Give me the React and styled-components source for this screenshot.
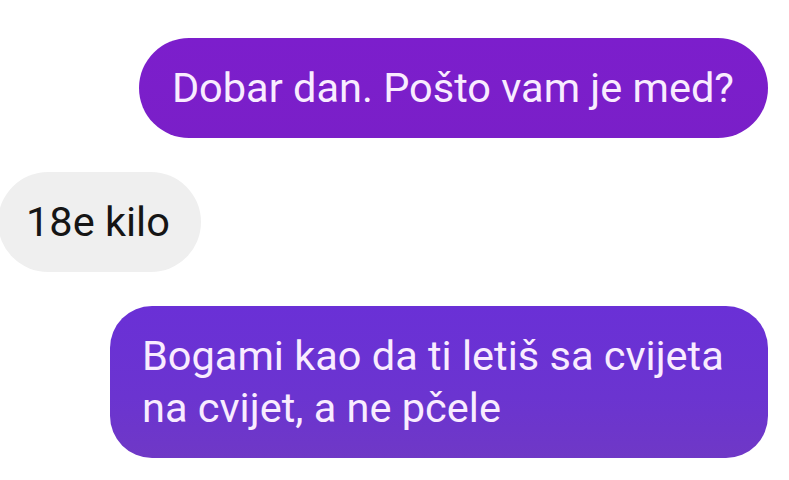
import React from "react";
import styled, { createGlobalStyle } from "styled-components";

const Global = createGlobalStyle`
  html, body { margin: 0; padding: 0; background: #ffffff; }
  body { font-family: Roboto, "Noto Sans", "Liberation Sans", sans-serif; }
`;

const Chat = styled.div`
  width: 789px;
  height: 480px;
  box-sizing: border-box;
  padding: 38px 21px 0 0;
  display: flex;
  flex-direction: column;
  gap: 34px;
  overflow: hidden;
`;

const Bubble = styled.div`
  box-sizing: border-box;
  font-size: 41.5px;
  line-height: 52px;
  padding: 24px ${(p) => (p.$tall ? "32px" : p.$mine ? "34px" : "31px")} 24px ${(p) => (p.$tall ? "32px" : p.$mine ? "33px" : "28px")};
  border-radius: ${(p) => (p.$tall ? "42px" : "50px")};
  align-self: ${(p) => (p.$mine ? "flex-end" : "flex-start")};
  max-width: 658px;
  color: ${(p) => (p.$mine ? "#f9ecff" : "#151515")};
  background: ${(p) =>
    p.$mine
      ? p.$tall
        ? "linear-gradient(180deg, #6a30d6 0%, #6b34d0 60%, #6f38c6 100%)"
        : "linear-gradient(180deg, #7c1ecc 0%, #7a1fc8 100%)"
      : "#efefef"};
  margin-left: ${(p) => (p.$mine ? "0" : "-2px")};
`;

export default function App() {
  return (
    <>
      <Global />
      <Chat>
        <Bubble $mine>Dobar dan. Pošto vam je med?</Bubble>
        <Bubble>18e kilo</Bubble>
        <Bubble $mine $tall>
          Bogami kao da ti letiš sa cvijeta na cvijet, a ne pčele
        </Bubble>
      </Chat>
    </>
  );
}
